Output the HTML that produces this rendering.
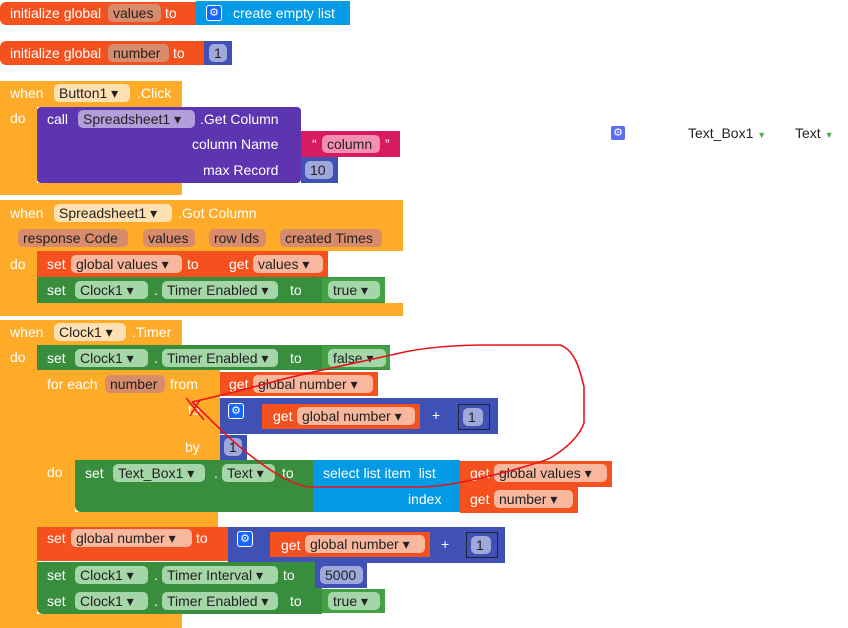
<!DOCTYPE html><html><head><meta charset="utf-8"><style>
body{margin:0;width:848px;height:628px;background:#fff;position:relative;overflow:hidden;font-family:"Liberation Sans",sans-serif;font-size:14px}
.b{position:absolute}
.t{position:absolute;color:#fff;white-space:nowrap;line-height:16px}
.f{position:absolute;border-radius:5px;color:#222;white-space:nowrap;line-height:18px;height:18px;padding:0 5px;box-sizing:border-box}
.o{background:#f4511e}.y{background:#fdab28}.p{background:#5e35b1}.g{background:#388e3c}.n{background:#3f51b5}.l{background:#039be5}.k{background:#d81b60}
.fo{background:#f9b79e}.fy{background:#ffe0b2}.fp{background:#b39ddb}.fg{background:#a5d6a7}.fn{background:#9fa8da}.fk{background:#f48fb1}.fv{background:#d98c6c}
.gear{position:absolute;width:14px;height:14px;background:#1565ff;border:1px solid #fff;border-radius:3px;color:#fff;font-size:11px;line-height:14px;text-align:center}
</style></head><body>
<!-- row1 -->
<div class="b o" style="left:0;top:2px;width:196px;height:23px;border-radius:6px 0 0 6px"></div>
<div class="t" style="left:10px;top:5px">initialize global</div>
<div class="f fv" style="left:108px;top:4px;width:53px">values</div>
<div class="t" style="left:165px;top:5px">to</div>
<div class="b l" style="left:196px;top:1px;width:154px;height:24px"></div>
<div class="gear" style="left:206px;top:5px">⚙</div>
<div class="t" style="left:233px;top:5px">create empty list</div>
<!-- row2 -->
<div class="b o" style="left:0;top:41px;width:204px;height:24px;border-radius:6px 0 0 6px"></div>
<div class="t" style="left:10px;top:45px">initialize global</div>
<div class="f fv" style="left:108px;top:44px;width:61px">number</div>
<div class="t" style="left:173px;top:45px">to</div>
<div class="b n" style="left:204px;top:41px;width:28px;height:24px"></div>
<div class="f fn" style="left:209px;top:44px;width:18px">1</div>
<!-- Button1 click -->
<div class="b y" style="left:0;top:81px;width:182px;height:26px;border-radius:6px 0 0 0"></div>
<div class="b y" style="left:0;top:81px;width:37px;height:114px"></div>
<div class="b y" style="left:0;top:183px;width:182px;height:12px"></div>
<div class="t" style="left:10px;top:85px">when</div>
<div class="f fy" style="left:54px;top:84px;width:76px">Button1 ▾</div>
<div class="t" style="left:137px;top:85px">.Click</div>
<div class="t" style="left:10px;top:110px">do</div>
<div class="b p" style="left:37px;top:107px;width:264px;height:76px;border-radius:4px"></div>
<div class="t" style="left:47px;top:111px">call</div>
<div class="f fp" style="left:78px;top:110px;width:117px">Spreadsheet1 ▾</div>
<div class="t" style="left:200px;top:111px">.Get Column</div>
<div class="t" style="left:192px;top:136px">column Name</div>
<div class="t" style="left:203px;top:162px">max Record</div>
<div class="b k" style="left:301px;top:131px;width:99px;height:26px"></div>
<div class="t" style="left:312px;top:136px">“</div>
<div class="f fk" style="left:322px;top:135px;width:58px">column</div>
<div class="t" style="left:385px;top:136px">”</div>
<div class="b n" style="left:301px;top:157px;width:37px;height:26px"></div>
<div class="f fn" style="left:305px;top:161px;width:28px">10</div>
<!-- Got Column -->
<div class="b y" style="left:0;top:200px;width:403px;height:51px;border-radius:6px 0 0 0"></div>
<div class="b y" style="left:0;top:200px;width:37px;height:116px"></div>
<div class="b y" style="left:0;top:303px;width:403px;height:13px"></div>
<div class="t" style="left:10px;top:205px">when</div>
<div class="f fy" style="left:54px;top:204px;width:118px">Spreadsheet1 ▾</div>
<div class="t" style="left:178px;top:205px">.Got Column</div>
<div class="f fv" style="left:18px;top:229px;width:110px">response Code</div>
<div class="f fv" style="left:143px;top:229px;width:52px">values</div>
<div class="f fv" style="left:209px;top:229px;width:57px">row Ids</div>
<div class="f fv" style="left:280px;top:229px;width:102px">created Times</div>
<div class="t" style="left:10px;top:256px">do</div>
<div class="b o" style="left:37px;top:251px;width:291px;height:26px"></div>
<div class="t" style="left:47px;top:256px">set</div>
<div class="f fo" style="left:71px;top:255px;width:111px">global values ▾</div>
<div class="t" style="left:187px;top:256px">to</div>
<div class="t" style="left:229px;top:256px">get</div>
<div class="f fo" style="left:253px;top:255px;width:70px">values ▾</div>
<div class="b g" style="left:37px;top:277px;width:348px;height:26px"></div>
<div class="t" style="left:47px;top:282px">set</div>
<div class="f fg" style="left:75px;top:281px;width:73px">Clock1 ▾</div>
<div class="t" style="left:154px;top:282px">.</div>
<div class="f fg" style="left:162px;top:281px;width:116px">Timer Enabled ▾</div>
<div class="t" style="left:290px;top:282px">to</div>
<div class="b" style="left:322px;top:278px;width:63px;height:24px;background:#43a047"></div>
<div class="f fg" style="left:328px;top:281px;width:52px">true ▾</div>
<!-- Clock timer -->
<div class="b y" style="left:0;top:320px;width:182px;height:26px;border-radius:6px 0 0 0"></div>
<div class="b y" style="left:0;top:320px;width:37px;height:308px"></div>
<div class="b y" style="left:0;top:614px;width:182px;height:14px"></div>
<div class="t" style="left:10px;top:324px">when</div>
<div class="f fy" style="left:54px;top:323px;width:72px">Clock1 ▾</div>
<div class="t" style="left:132px;top:324px">.Timer</div>
<div class="t" style="left:10px;top:349px">do</div>
<div class="b g" style="left:37px;top:345px;width:353px;height:25px"></div>
<div class="t" style="left:47px;top:350px">set</div>
<div class="f fg" style="left:75px;top:349px;width:73px">Clock1 ▾</div>
<div class="t" style="left:154px;top:350px">.</div>
<div class="f fg" style="left:162px;top:349px;width:116px">Timer Enabled ▾</div>
<div class="t" style="left:290px;top:350px">to</div>
<div class="b" style="left:322px;top:346px;width:68px;height:23px;background:#43a047"></div>
<div class="f fg" style="left:328px;top:349px;width:58px">false ▾</div>
<!-- for each -->
<div class="b y" style="left:37px;top:370px;width:183px;height:90px"></div>
<div class="b y" style="left:37px;top:370px;width:38px;height:157px"></div>
<div class="b y" style="left:37px;top:512px;width:181px;height:15px"></div>
<div class="t" style="left:47px;top:376px">for each</div>
<div class="f fv" style="left:105px;top:375px;width:60px">number</div>
<div class="t" style="left:170px;top:376px">from</div>
<div class="b o" style="left:220px;top:372px;width:158px;height:24px"></div>
<div class="t" style="left:229px;top:376px">get</div>
<div class="f fo" style="left:253px;top:375px;width:120px">global number ▾</div>
<div class="t" style="left:188px;top:402px">to</div>
<div class="b n" style="left:220px;top:398px;width:278px;height:36px"></div>
<div class="gear" style="left:228px;top:403px">⚙</div>
<div class="b o" style="left:262px;top:404px;width:158px;height:25px"></div>
<div class="t" style="left:273px;top:408px">get</div>
<div class="f fo" style="left:297px;top:407px;width:118px">global number ▾</div>
<div class="t" style="left:432px;top:407px">+</div>
<div class="b" style="left:458px;top:404px;width:32px;height:26px;border:1px solid #223;box-sizing:border-box"></div>
<div class="f fn" style="left:463px;top:408px;width:20px">1</div>
<div class="t" style="left:185px;top:439px">by</div>
<div class="b n" style="left:220px;top:435px;width:27px;height:25px"></div>
<div class="f fn" style="left:224px;top:438px;width:18px">1</div>
<div class="t" style="left:47px;top:464px">do</div>
<div class="b g" style="left:75px;top:460px;width:238px;height:52px;border-radius:0 0 0 6px"></div>
<div class="t" style="left:85px;top:465px">set</div>
<div class="f fg" style="left:113px;top:464px;width:92px">Text_Box1 ▾</div>
<div class="t" style="left:214px;top:465px">.</div>
<div class="f fg" style="left:222px;top:464px;width:53px">Text ▾</div>
<div class="t" style="left:282px;top:465px">to</div>
<div class="b l" style="left:313px;top:460px;width:147px;height:52px"></div>
<div class="t" style="left:323px;top:465px">select list item&nbsp; list</div>
<div class="t" style="left:408px;top:491px">index</div>
<div class="b o" style="left:460px;top:461px;width:152px;height:26px"></div>
<div class="t" style="left:470px;top:465px">get</div>
<div class="f fo" style="left:494px;top:464px;width:113px">global values ▾</div>
<div class="b o" style="left:460px;top:487px;width:118px;height:26px"></div>
<div class="t" style="left:470px;top:491px">get</div>
<div class="f fo" style="left:494px;top:490px;width:79px">number ▾</div>
<!-- set global number -->
<div class="b o" style="left:37px;top:527px;width:191px;height:34px"></div>
<div class="t" style="left:47px;top:530px">set</div>
<div class="f fo" style="left:71px;top:529px;width:121px">global number ▾</div>
<div class="t" style="left:196px;top:530px">to</div>
<div class="b n" style="left:228px;top:527px;width:277px;height:36px"></div>
<div class="gear" style="left:237px;top:531px">⚙</div>
<div class="b o" style="left:270px;top:532px;width:160px;height:25px"></div>
<div class="t" style="left:281px;top:537px">get</div>
<div class="f fo" style="left:305px;top:535px;width:120px">global number ▾</div>
<div class="t" style="left:441px;top:536px">+</div>
<div class="b" style="left:466px;top:532px;width:32px;height:26px;border:1px solid #223;box-sizing:border-box"></div>
<div class="f fn" style="left:471px;top:536px;width:20px">1</div>
<div class="b g" style="left:37px;top:562px;width:283px;height:26px"></div>
<div class="t" style="left:47px;top:567px">set</div>
<div class="f fg" style="left:75px;top:566px;width:73px">Clock1 ▾</div>
<div class="t" style="left:154px;top:567px">.</div>
<div class="f fg" style="left:162px;top:566px;width:116px">Timer Interval ▾</div>
<div class="t" style="left:283px;top:567px">to</div>
<div class="b n" style="left:315px;top:562px;width:52px;height:26px"></div>
<div class="f fn" style="left:320px;top:566px;width:43px">5000</div>
<div class="b g" style="left:37px;top:588px;width:285px;height:26px;border-radius:0 0 0 6px"></div>
<div class="t" style="left:47px;top:593px">set</div>
<div class="f fg" style="left:75px;top:592px;width:73px">Clock1 ▾</div>
<div class="t" style="left:154px;top:593px">.</div>
<div class="f fg" style="left:162px;top:592px;width:116px">Timer Enabled ▾</div>
<div class="t" style="left:290px;top:593px">to</div>
<div class="b" style="left:322px;top:589px;width:63px;height:24px;background:#43a047"></div>
<div class="f fg" style="left:328px;top:592px;width:52px">true ▾</div>
<!-- right floating -->
<div class="gear" style="left:610px;top:125px;background:#5c6bf0">⚙</div>
<div class="t" style="left:688px;top:125px;color:#222">Text_Box1 <span style="color:#4caf50;font-size:9px">▼</span></div>
<div class="t" style="left:795px;top:125px;color:#222">Text <span style="color:#4caf50;font-size:9px">▼</span></div>
<svg class="b" style="left:0;top:0" width="848" height="628"><path d="M192,402 C210,398 250,388 280,380 S370,360 400,353 S470,345 484,345 L560,345 C575,350 580,370 584,387 L584,423 C578,440 560,452 552,457 S500,474 472,480 S430,487 420,487 L308,487 C290,484 265,468 240,447 S210,418 192,402 M186,398 L204,420 M200,400 L190,416" fill="none" stroke="#e8141c" stroke-width="1.6"/></svg>
</body></html>
